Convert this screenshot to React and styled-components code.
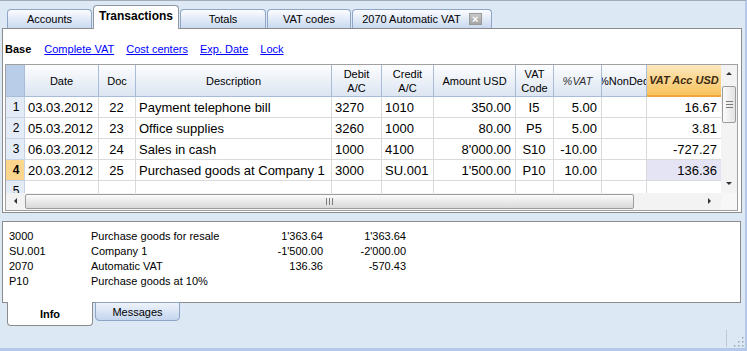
import React from "react";
import styled, { createGlobalStyle } from "styled-components";

const GlobalStyle = createGlobalStyle`
  html, body {
    margin: 0;
    padding: 0;
    background: #dde8f5;
  }
  * {
    box-sizing: border-box;
  }
`;

const Window = styled.div`
  width: 747px;
  height: 351px;
  display: flex;
  flex-direction: column;
  background: #dde8f5;
  border-top: 1px solid #a3abb8;
  border-right: 2px solid #b4c9e9;
  border-bottom: 3px solid #b4c9e9;
  font-family: "Liberation Sans", Arial, sans-serif;
  font-size: 11px;
  color: #000;
  overflow: hidden;
`;

const TabBar = styled.div`
  height: 27px;
  display: flex;
  align-items: flex-end;
  gap: 1px;
  padding-left: 7px;
`;

const Tab = styled.div`
  position: relative;
  width: ${(p) => p.$width}px;
  height: ${(p) => (p.$active ? 24 : 19)}px;
  margin-bottom: ${(p) => (p.$active ? -1 : 0)}px;
  z-index: ${(p) => (p.$active ? 2 : 1)};
  display: flex;
  align-items: center;
  justify-content: center;
  gap: 8px;
  padding-bottom: ${(p) => (p.$active ? 3 : 0)}px;
  border: 1px solid ${(p) => (p.$active ? "#8f969f" : "#8ea5c6")};
  border-bottom: none;
  border-radius: 4px 4px 0 0;
  background: ${(p) =>
    p.$active ? "#ffffff" : "linear-gradient(#fbfcff, #c9d9f0)"};
  font-weight: ${(p) => (p.$active ? "bold" : "normal")};
  font-size: ${(p) => (p.$active ? 12 : 11)}px;
  white-space: nowrap;
`;

const CloseBox = styled.span`
  width: 13px;
  height: 12px;
  display: flex;
  align-items: center;
  justify-content: center;
  background: linear-gradient(#c8c8c8, #a4a4a4);
  border: 1px solid #9a9a9a;
  color: #fff;
  font-size: 11px;
  font-weight: bold;
  line-height: 1;
`;

const MainPanel = styled.div`
  margin: 0 3px 0 2px;
  height: 185px;
  background: #fff;
  border: 1px solid #8c8c8c;
  padding: 0 3px 1px 2px;
  display: flex;
  flex-direction: column;
`;

const LinkBar = styled.div`
  height: 35px;
  display: flex;
  align-items: center;
  gap: 12px;
  padding: 4px 0 0 0;
`;

const ViewLabel = styled.span`
  font-weight: bold;
  margin-right: 1px;
`;

const ViewLink = styled.a`
  color: #0000ff;
  text-decoration: underline;
  cursor: pointer;
`;

const GridFrame = styled.div`
  border: 1px solid #a0a0a0;
  display: flex;
  flex-direction: column;
  height: 147px;
`;

const GridTop = styled.div`
  display: flex;
  height: 128px;
`;

const Grid = styled.div`
  width: 716px;
  height: 128px;
  overflow: hidden;
  display: grid;
  grid-template-columns: 19px 74px 37px 196px 50px 52px 82px 38px 48px 45px 75px;
  grid-template-rows: 32px;
  grid-auto-rows: 21px;
`;

const HeadCell = styled.div`
  display: flex;
  align-items: center;
  justify-content: center;
  text-align: center;
  overflow: hidden;
  white-space: nowrap;
  line-height: 14px;
  background: linear-gradient(#fcfdfe, #dce5f2);
  border-right: 1px solid #a9bcd7;
  border-bottom: 1px solid #a9bcd7;
  font-style: ${(p) => (p.$italic ? "italic" : "normal")};
  color: ${(p) => (p.$italic ? "#333" : "#000")};
`;

const CornerCell = styled(HeadCell)`
  background: #b9cde9;
`;

const AccentHead = styled(HeadCell)`
  background: linear-gradient(#fde8bd, #f8c35e);
  border-bottom: 2px solid #f2a33a;
  font-weight: bold;
  font-style: italic;
  color: #3a2a10;
`;

const RowNum = styled.div`
  display: flex;
  align-items: center;
  justify-content: center;
  padding-left: 2px;
  background: ${(p) => (p.$active ? "#fdd68d" : "#e3ebf6")};
  border-right: 1px solid #c6d3e6;
  border-bottom: 1px solid #c6d3e6;
  font-size: 12px;
  font-weight: ${(p) => (p.$active ? "bold" : "normal")};
  overflow: hidden;
`;

const Cell = styled.div`
  display: flex;
  align-items: center;
  justify-content: ${(p) =>
    p.$align === "right" ? "flex-end" : p.$align === "center" ? "center" : "flex-start"};
  padding: 0 4px 0 3px;
  border-right: 1px solid #dadada;
  border-bottom: 1px solid #dadada;
  background: ${(p) => (p.$selected ? "#e4e4f5" : "#fff")};
  font-size: 13px;
  white-space: nowrap;
  overflow: hidden;
`;

const VScroll = styled.div`
  width: 16px;
  height: 128px;
  background: #f3f3f3;
  display: flex;
  flex-direction: column;
  align-items: center;
`;

const ArrowBtn = styled.div`
  width: ${(p) => p.$width || 16}px;
  height: 17px;
  display: flex;
  align-items: center;
  justify-content: center;
`;

const VThumb = styled.div`
  width: 14px;
  height: 37px;
  margin-top: 4px;
  border: 1px solid #9c9c9c;
  border-radius: 2px;
  background: linear-gradient(90deg, #fbfbfb, #e2e2e2);
  display: flex;
  align-items: center;
  justify-content: center;
`;

const Spacer = styled.div`
  flex: 1;
`;

const HScroll = styled.div`
  height: 17px;
  display: flex;
  align-items: center;
  background: #f3f3f3;
`;

const HThumb = styled.div`
  width: 609px;
  height: 15px;
  border: 1px solid #9c9c9c;
  border-radius: 2px;
  background: linear-gradient(#fbfbfb, #d9d9d9);
  display: flex;
  align-items: center;
  justify-content: center;
`;

const ScrollCorner = styled.div`
  width: 16px;
  height: 17px;
  background: #f7f7f7;
`;

const InfoPanel = styled.div`
  margin: 8px 4px 0 2px;
  height: 82px;
  background: #fff;
  border: 1px solid #8c8c8c;
  padding: 7px 0 0 6px;
  display: grid;
  grid-template-columns: 82px 150px 82px 83px;
  grid-auto-rows: 15px;
  align-content: start;
  font-size: 11px;
`;

const InfoValue = styled.div`
  text-align: ${(p) => (p.$right ? "right" : "left")};
  line-height: 15px;
  white-space: nowrap;
`;

const BottomTabs = styled.div`
  display: flex;
  gap: 2px;
  padding-left: 7px;
  margin-top: -1px;
  align-items: flex-start;
`;

const BottomTab = styled.div`
  position: relative;
  width: ${(p) => (p.$active ? 86 : 85)}px;
  height: ${(p) => (p.$active ? 24 : 19)}px;
  display: flex;
  align-items: center;
  justify-content: center;
  padding-top: ${(p) => (p.$active ? 1 : 0)}px;
  border: 1px solid ${(p) => (p.$active ? "#8c8c8c" : "#8ea5c6")};
  border-top: ${(p) => (p.$active ? "none" : "1px solid #8ea5c6")};
  border-radius: 0 0 4px 4px;
  background: ${(p) => (p.$active ? "#fff" : "linear-gradient(#eef3fb, #c4d5ee)")};
  font-weight: ${(p) => (p.$active ? "bold" : "normal")};
`;

const StatusBar = styled.div`
  margin-top: auto;
  height: 20px;
  display: flex;
  justify-content: flex-end;
  align-items: flex-end;
  padding: 0 1px 1px 0;
`;

const StatusSep = styled.div`
  width: 1px;
  height: 17px;
  background: #c0c8d4;
  margin-right: 6px;
`;

const Arrow = ({ dir }) => {
  const pts = {
    up: "0,4 3,1 6,4",
    down: "0,0 3,3 6,0",
    left: "4,0 1,3 4,6",
    right: "1,0 4,3 1,6",
  }[dir];
  const w = dir === "up" || dir === "down" ? 7 : 5;
  const h = dir === "up" || dir === "down" ? 5 : 7;
  return (
    <svg width={w} height={h} viewBox={`0 0 ${w} ${h}`}>
      <polygon points={pts} fill="#333" />
    </svg>
  );
};

const GripLines = ({ vertical }) =>
  vertical ? (
    <svg width="7" height="7" viewBox="0 0 7 7">
      <path d="M0 0.5H7M0 3.5H7M0 6.5H7" stroke="#7a7a7a" strokeWidth="1" />
    </svg>
  ) : (
    <svg width="7" height="7" viewBox="0 0 7 7">
      <path d="M0.5 0V7M3.5 0V7M6.5 0V7" stroke="#7a7a7a" strokeWidth="1" />
    </svg>
  );

const ResizeGrip = () => (
  <svg width="11" height="11" viewBox="0 0 11 11">
    {[
      [9, 1],
      [9, 5],
      [5, 5],
      [9, 9],
      [5, 9],
      [1, 9],
    ].map(([x, y]) => (
      <rect key={`${x}-${y}`} x={x} y={y} width="1.5" height="1.5" fill="#9aa6b6" />
    ))}
  </svg>
);

const tabs = [
  { label: "Accounts", width: 85 },
  { label: "Transactions", width: 86, active: true },
  { label: "Totals", width: 86 },
  { label: "VAT codes", width: 84 },
  { label: "2070 Automatic VAT", width: 140, close: true },
];

const views = ["Complete VAT", "Cost centers", "Exp. Date", "Lock"];

const columns = [
  { key: "date", align: "left" },
  { key: "doc", align: "center" },
  { key: "desc", align: "left" },
  { key: "debit", align: "left" },
  { key: "credit", align: "left" },
  { key: "amount", align: "right" },
  { key: "code", align: "center" },
  { key: "pct", align: "right" },
  { key: "nonded", align: "right" },
  { key: "vatacc", align: "right" },
];

const rows = [
  { date: "03.03.2012", doc: "22", desc: "Payment telephone bill", debit: "3270", credit: "1010", amount: "350.00", code: "I5", pct: "5.00", nonded: "", vatacc: "16.67" },
  { date: "05.03.2012", doc: "23", desc: "Office supplies", debit: "3260", credit: "1000", amount: "80.00", code: "P5", pct: "5.00", nonded: "", vatacc: "3.81" },
  { date: "06.03.2012", doc: "24", desc: "Sales in cash", debit: "1000", credit: "4100", amount: "8'000.00", code: "S10", pct: "-10.00", nonded: "", vatacc: "-727.27" },
  { date: "20.03.2012", doc: "25", desc: "Purchased goods at Company 1", debit: "3000", credit: "SU.001", amount: "1'500.00", code: "P10", pct: "10.00", nonded: "", vatacc: "136.36", active: true },
  { date: "", doc: "", desc: "", debit: "", credit: "", amount: "", code: "", pct: "", nonded: "", vatacc: "" },
];

const info = [
  ["3000", "Purchase goods for resale", "1'363.64", "1'363.64"],
  ["SU.001", "Company 1", "-1'500.00", "-2'000.00"],
  ["2070", "Automatic VAT", "136.36", "-570.43"],
  ["P10", "Purchase goods at 10%", "", ""],
];

export default function App() {
  return (
    <>
      <GlobalStyle />
      <Window>
        <TabBar>
          {tabs.map((t) => (
            <Tab key={t.label} $width={t.width} $active={t.active}>
              <span>{t.label}</span>
              {t.close && <CloseBox>×</CloseBox>}
            </Tab>
          ))}
        </TabBar>

        <MainPanel>
          <LinkBar>
            <ViewLabel>Base</ViewLabel>
            {views.map((v) => (
              <ViewLink key={v}>{v}</ViewLink>
            ))}
          </LinkBar>

          <GridFrame>
            <GridTop>
              <Grid>
                <CornerCell />
                <HeadCell>Date</HeadCell>
                <HeadCell>Doc</HeadCell>
                <HeadCell>Description</HeadCell>
                <HeadCell>
                  Debit
                  <br />
                  A/C
                </HeadCell>
                <HeadCell>
                  Credit
                  <br />
                  A/C
                </HeadCell>
                <HeadCell>Amount USD</HeadCell>
                <HeadCell>
                  VAT
                  <br />
                  Code
                </HeadCell>
                <HeadCell $italic>%VAT</HeadCell>
                <HeadCell>%NonDed</HeadCell>
                <AccentHead>VAT Acc USD</AccentHead>

                {rows.map((r, i) => (
                  <React.Fragment key={i}>
                    <RowNum $active={r.active}>{i + 1}</RowNum>
                    {columns.map((c) => (
                      <Cell
                        key={c.key}
                        $align={c.align}
                        $selected={r.active && c.key === "vatacc"}
                      >
                        {r[c.key]}
                      </Cell>
                    ))}
                  </React.Fragment>
                ))}
              </Grid>

              <VScroll>
                <ArrowBtn>
                  <Arrow dir="up" />
                </ArrowBtn>
                <VThumb>
                  <GripLines vertical />
                </VThumb>
                <Spacer />
                <ArrowBtn>
                  <Arrow dir="down" />
                </ArrowBtn>
              </VScroll>
            </GridTop>

            <HScroll>
              <ArrowBtn $width={19}>
                <Arrow dir="left" />
              </ArrowBtn>
              <HThumb>
                <GripLines />
              </HThumb>
              <Spacer />
              <ArrowBtn $width={24}>
                <Arrow dir="right" />
              </ArrowBtn>
              <ScrollCorner />
            </HScroll>
          </GridFrame>
        </MainPanel>

        <InfoPanel>
          {info.map((row, i) => (
            <React.Fragment key={i}>
              <InfoValue>{row[0]}</InfoValue>
              <InfoValue>{row[1]}</InfoValue>
              <InfoValue $right>{row[2]}</InfoValue>
              <InfoValue $right>{row[3]}</InfoValue>
            </React.Fragment>
          ))}
        </InfoPanel>

        <BottomTabs>
          <BottomTab $active>Info</BottomTab>
          <BottomTab>Messages</BottomTab>
        </BottomTabs>

        <StatusBar>
          <StatusSep />
          <ResizeGrip />
        </StatusBar>
      </Window>
    </>
  );
}
